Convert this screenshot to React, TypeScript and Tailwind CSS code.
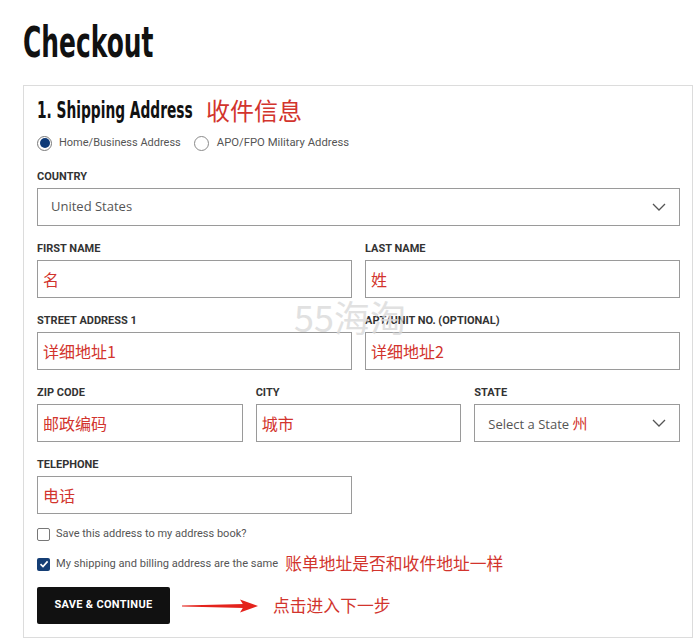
import React from "react";

const RED = "text-[#d2342d]";

function Label({ children }: { children: React.ReactNode }) {
  return (
    <div className="h-[14px] leading-[14px] text-[11px] font-bold text-[#333] uppercase mb-1 whitespace-nowrap">
      {children}
    </div>
  );
}

function TextBox({ value }: { value: string }) {
  return (
    <div className={`h-[38px] border border-[#9a9a9a] flex items-center pl-[5px] text-[16px] ${RED}`} style={{ fontFamily: '"Noto Sans CJK SC", "Noto Sans", sans-serif' }}>
      {value}
    </div>
  );
}

function Chevron() {
  return (
    <svg width="14" height="8" viewBox="0 0 14 8" className="shrink-0">
      <polyline points="1,1 7,7 13,1" fill="none" stroke="#555" strokeWidth="1.3" />
    </svg>
  );
}

function Field({ label, value }: { label: string; value: string }) {
  return (
    <div className="min-w-0">
      <Label>{label}</Label>
      <TextBox value={value} />
    </div>
  );
}

export default function App() {
  return (
    <div className="relative w-[700px] h-[644px] bg-white overflow-hidden" style={{ fontFamily: 'Roboto, "Noto Sans", sans-serif' }}>
      <div className="pl-[23px] pt-[16px]">
        <div className="h-[52px] flex items-center">
          <span
            className="inline-block text-[43px] font-bold text-[#111] origin-left scale-x-[0.645] whitespace-nowrap leading-none"
            style={{ fontFamily: '"DejaVu Sans Condensed", "Liberation Sans Narrow", "DejaVu Sans", sans-serif' }}
          >
            Checkout
          </span>
        </div>
        <div className="mt-[17px] w-[670px] border border-[#dcdcdc] pl-[13px] pr-[12px] pt-[9px] pb-[13px]">
          <div className="h-[30px] flex items-center whitespace-nowrap">
            <span
              className="inline-block w-[170px] text-[23px] font-bold text-[#111] origin-left scale-x-[0.665] leading-none"
              style={{ fontFamily: '"DejaVu Sans Condensed", "Liberation Sans Narrow", "DejaVu Sans", sans-serif' }}
            >
              1. Shipping Address
            </span>
            <span className={`-ml-[1px] text-[24px] leading-none ${RED}`} style={{ fontFamily: '"Noto Sans CJK SC", sans-serif' }}>
              收件信息
            </span>
          </div>
          <div className="mt-[10px] h-[16px] flex items-center text-[11px] text-[#555]">
            <span className="w-[15px] h-[15px] rounded-full border border-[#7a7a7a] flex items-center justify-center">
              <span className="w-[10px] h-[10px] rounded-full bg-[#0e3a78]" />
            </span>
            <span className="ml-[7px]">Home/Business Address</span>
            <span className="ml-[13px] w-[15px] h-[15px] rounded-full border border-[#8a8a8a]" />
            <span className="ml-[8px] text-[11.3px]">APO/FPO Military Address</span>
          </div>

          <div className="mt-[19px]">
            <Label>Country</Label>
            <div className="h-[38px] border border-[#9a9a9a] flex items-center justify-between pl-[13px] pr-[13px] text-[13px] text-[#555]" style={{ fontFamily: '"Open Sans", sans-serif' }}>
              <span>United States</span>
              <Chevron />
            </div>
          </div>

          <div className="mt-[16px] grid grid-cols-2 gap-x-[13px]">
            <Field label="First Name" value="名" />
            <Field label="Last Name" value="姓" />
          </div>
          <div className="mt-[16px] grid grid-cols-2 gap-x-[13px]">
            <Field label="Street Address 1" value="详细地址1" />
            <Field label="Apt/Unit No. (Optional)" value="详细地址2" />
          </div>
          <div className="mt-[16px] grid grid-cols-3 gap-x-[13px]">
            <Field label="Zip Code" value="邮政编码" />
            <Field label="City" value="城市" />
            <div>
              <Label>State</Label>
              <div className="h-[38px] border border-[#9a9a9a] flex items-center justify-between pl-[13px] pr-[13px] text-[13px] text-[#555]" style={{ fontFamily: '"Open Sans", "Noto Sans CJK SC", sans-serif' }}>
                <span>
                  Select a State <span className={`text-[15px] ${RED}`} style={{ fontFamily: '"Noto Sans CJK SC", sans-serif' }}>州</span>
                </span>
                <Chevron />
              </div>
            </div>
          </div>
          <div className="mt-[16px] grid grid-cols-2 gap-x-[13px]">
            <Field label="Telephone" value="电话" />
          </div>

          <div className="mt-[12px] h-[16px] flex items-center text-[11px] text-[#555]">
            <span className="w-[13px] h-[13px] border border-[#777] rounded-[2px]" />
            <span className="ml-[6px]">Save this address to my address book?</span>
          </div>
          <div className="mt-[14px] h-[16px] flex items-center text-[11px] text-[#555] whitespace-nowrap">
            <span className="w-[13px] h-[13px] rounded-[2px] bg-[#153e75] flex items-center justify-center">
              <svg width="10" height="10" viewBox="0 0 10 10">
                <polyline points="1.5,5.2 4,7.6 8.6,2.4" fill="none" stroke="#fff" strokeWidth="1.6" />
              </svg>
            </span>
            <span className="ml-[6px] text-[11.1px]">My shipping and billing address are the same</span>
            <span className={`ml-[7px] text-[16.8px] ${RED}`} style={{ fontFamily: '"Noto Sans CJK SC", sans-serif' }}>
              账单地址是否和收件地址一样
            </span>
          </div>

          <div className="mt-[15px] flex items-center">
            <button className="w-[133px] h-[37px] bg-[#111] rounded-[2px] text-white text-[11px] font-bold tracking-[0.3px]">
              SAVE &amp; CONTINUE
            </button>
            <svg width="80" height="14" viewBox="0 0 80 14" className="ml-[12px]">
              <polygon points="0,6.4 62,5 62,9 0,7.6" fill="#e4231c" />
              <polygon points="58,0.5 76,7 58,13.5 62,7" fill="#e4231c" />
            </svg>
            <span className={`ml-[11px] text-[16.8px] ${RED}`} style={{ fontFamily: '"Noto Sans CJK SC", sans-serif' }}>
              点击进入下一步
            </span>
          </div>
        </div>
      </div>

      <div
        className="absolute left-[294px] top-[298px] text-[36px] leading-none text-[#dadada] opacity-80 pointer-events-none whitespace-nowrap"
        style={{ fontFamily: '"Noto Sans CJK SC", sans-serif' }}
      >
        55海淘
      </div>
    </div>
  );
}
